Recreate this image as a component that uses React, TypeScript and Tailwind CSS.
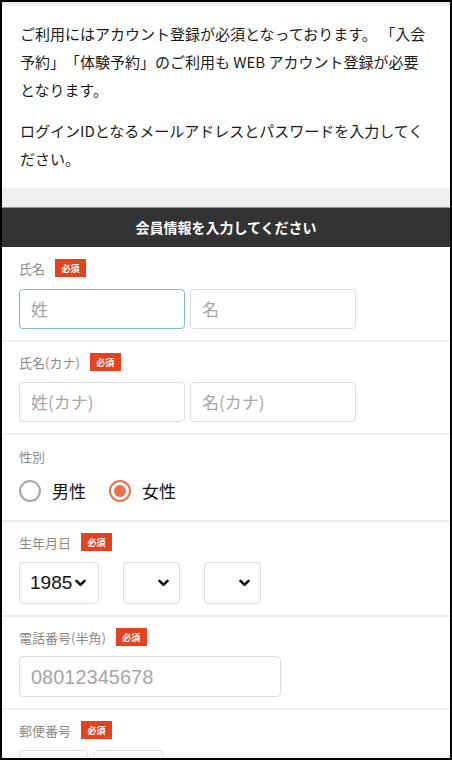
import React from "react";

const font = { fontFamily: '"Noto Sans CJK JP", "Noto Sans", sans-serif' };

function Badge() {
  return (
    <span className="inline-flex h-[18px] w-[31px] items-center justify-center bg-[#e5421f] text-[9px] font-bold leading-none text-white">
      必須
    </span>
  );
}

function Label({ text, required = true }: { text: string; required?: boolean }) {
  return (
    <div className="flex h-[18px] items-center gap-[10px]">
      <span className="text-[13px] leading-none text-[#8a8a8a]">{text}</span>
      {required && <Badge />}
    </div>
  );
}

function Chevron() {
  return (
    <svg width="11" height="8" viewBox="0 0 11 8" className="shrink-0">
      <path d="M1.5 1.8 L5.5 5.8 L9.5 1.8" fill="none" stroke="#111" strokeWidth="2.6" strokeLinecap="round" strokeLinejoin="round" />
    </svg>
  );
}

function TextBox({ placeholder, className, focused = false }: { placeholder: string; className: string; focused?: boolean }) {
  return (
    <div
      className={
        "flex items-center rounded-[4px] border bg-white pl-[11px] text-[#a6a6a6] " +
        (focused ? "border-[#7fbccb] " : "border-[#dedede] ") +
        className
      }
    >
      {placeholder}
    </div>
  );
}

export default function App() {
  return (
    <div className="h-[760px] w-[452px] overflow-hidden border-2 border-black bg-white" style={font}>
      <div className="h-[4px] bg-[#efefef]" />
      <div className="px-[18px] pt-[14px] pb-[15px] text-[15px] leading-[28px] text-[#1a1a1a] [text-spacing-trim:space-all]">
        <p>ご利用にはアカウント登録が必須となっております。 「入会予約」「体験予約」のご利用も WEB アカウント登録が必要となります。</p>
        <p className="mt-[13px]">ログインIDとなるメールアドレスとパスワードを入力してください。</p>
      </div>
      <div className="h-[19px] bg-[#efefef]" />
      <div className="h-[1px] bg-[#9a9a9a]" />
      <div className="flex h-[39px] items-center justify-center bg-[#333333] text-[14px] font-bold text-white">
        会員情報を入力してください
      </div>

      <div className="border-b-2 border-[#eeeeee] px-[17px] pt-[12px] pb-[11px]">
        <Label text="氏名" />
        <div className="mt-[12px] flex gap-[5px]">
          <TextBox placeholder="姓" className="h-[40px] w-[166px] text-[17px]" focused />
          <TextBox placeholder="名" className="h-[40px] w-[166px] text-[17px]" />
        </div>
      </div>

      <div className="border-b-2 border-[#eeeeee] px-[17px] pt-[11px] pb-[11px]">
        <Label text="氏名(カナ)" />
        <div className="mt-[11px] flex gap-[5px]">
          <TextBox placeholder="姓(カナ)" className="h-[40px] w-[166px] text-[17px]" />
          <TextBox placeholder="名(カナ)" className="h-[40px] w-[166px] text-[17px]" />
        </div>
      </div>

      <div className="border-b-2 border-[#eeeeee] px-[17px] pt-[12px] pb-[14px]">
        <Label text="性別" required={false} />
        <div className="mt-[11px] flex h-[30px] items-center">
          <span className="h-[22px] w-[22px] rounded-full border-2 border-[#a8a8a8]" />
          <span className="ml-[11px] text-[17px] text-[#111]">男性</span>
          <span className="ml-[23px] flex h-[22px] w-[22px] items-center justify-center rounded-full border-2 border-[#e8714f]">
            <span className="h-[12px] w-[12px] rounded-full bg-[#e8714f]" />
          </span>
          <span className="ml-[11px] text-[17px] text-[#111]">女性</span>
        </div>
      </div>

      <div className="border-b-2 border-[#eeeeee] px-[17px] pt-[11px] pb-[11px]">
        <Label text="生年月日" />
        <div className="mt-[11px] flex gap-[24px]">
          <div className="flex h-[42px] w-[80px] items-center rounded-[4px] border border-[#dedede] pl-[10px] pr-[8px] text-[19px] text-[#111]">
            <span className="mr-[3px] font-['Liberation_Sans',sans-serif]">1985</span>
            <Chevron />
          </div>
          <div className="flex h-[42px] w-[57px] items-center justify-end rounded-[4px] border border-[#dedede] pr-[10px]">
            <Chevron />
          </div>
          <div className="flex h-[42px] w-[57px] items-center justify-end rounded-[4px] border border-[#dedede] pr-[10px]">
            <Chevron />
          </div>
        </div>
      </div>

      <div className="border-b-2 border-[#eeeeee] px-[17px] pt-[11px] pb-[11px]">
        <Label text="電話番号(半角)" />
        <div className="mt-[10px] flex">
          <TextBox placeholder="08012345678" className="h-[41px] w-[262px] font-['Liberation_Sans',sans-serif] text-[20px]" />
        </div>
      </div>

      <div className="px-[17px] pt-[11px] pb-[11px]">
        <Label text="郵便番号" />
        <div className="mt-[11px] flex gap-[6px]">
          <TextBox placeholder="" className="h-[41px] w-[69px]" />
          <TextBox placeholder="" className="h-[41px] w-[69px]" />
        </div>
      </div>
    </div>
  );
}
